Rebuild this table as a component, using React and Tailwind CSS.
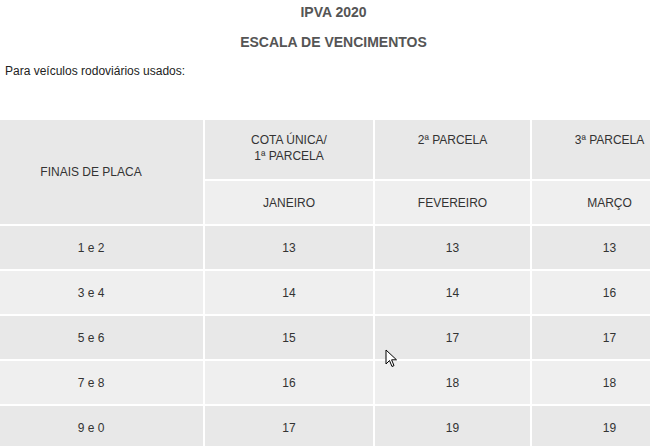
const rows = [
  ['1 e 2', '13', '13', '13'],
  ['3 e 4', '14', '14', '16'],
  ['5 e 6', '15', '17', '17'],
  ['7 e 8', '16', '18', '18'],
  ['9 e 0', '17', '19', '19'],
];

const App = () => {
  return (
    <div className="relative w-[650px] h-[446px] overflow-hidden bg-white font-['Liberation_Sans',Arial,sans-serif]">
      <div className="-ml-[21px] w-[709px]">
        {/* Titles */}
        <h1 className="pt-[4px] text-center text-[14px] leading-[16px] font-bold text-[#555]">IPVA 2020</h1>
        <h2 className="mt-[14px] text-center text-[14px] leading-[16px] font-bold text-[#555]">ESCALA DE VENCIMENTOS</h2>
        <p className="mt-[14px] pl-[26px] text-[12px] leading-[14px] text-[#222]">Para veículos rodoviários usados:</p>

        {/* Tabela */}
        <table className="mt-[40px] w-[709px] border-collapse text-[12px] leading-[16px] text-[#333] table-fixed">
          <colgroup>
            <col className="w-[225px]" />
            <col className="w-[170px]" />
            <col className="w-[157px]" />
            <col className="w-[157px]" />
          </colgroup>
          <thead>
            <tr className="h-[61px] bg-[#e8e8e8]">
              <th rowSpan={2} className="border-2 border-white border-l-0 font-normal align-middle text-center">FINAIS DE PLACA</th>
              <th className="border-2 border-white font-normal align-top pt-[12px]">COTA ÚNICA/<br />1ª PARCELA</th>
              <th className="border-2 border-white font-normal align-top pt-[12px]">2ª PARCELA</th>
              <th className="border-2 border-white font-normal align-top pt-[12px]">3ª PARCELA</th>
            </tr>
            <tr className="h-[45px] bg-[#efefef]">
              <th className="border-2 border-white font-normal">JANEIRO</th>
              <th className="border-2 border-white font-normal">FEVEREIRO</th>
              <th className="border-2 border-white font-normal">MARÇO</th>
            </tr>
          </thead>
          <tbody>
            {rows.map((r, i) => (
              <tr key={i} className={i % 2 === 0 ? 'h-[45px] bg-[#e8e8e8]' : 'h-[45px] bg-[#efefef]'}>
                {r.map((c, j) => (
                  <td key={j} className={j === 0 ? 'border-2 border-white border-l-0 text-center' : 'border-2 border-white text-center'}>{c}</td>
                ))}
              </tr>
            ))}
          </tbody>
        </table>
      </div>

      {/* mouse cursor */}
      <svg className="absolute left-[385px] top-[349px]" width="13" height="20" viewBox="0 0 13 20">
        <path d="M1 1 L1 15 L4.5 11.5 L7 17.5 L9 16.6 L6.6 10.8 L11.5 10.8 Z" fill="#fff" stroke="#000" strokeWidth="1" strokeLinejoin="round" />
      </svg>
    </div>
  );
};

export default App;
